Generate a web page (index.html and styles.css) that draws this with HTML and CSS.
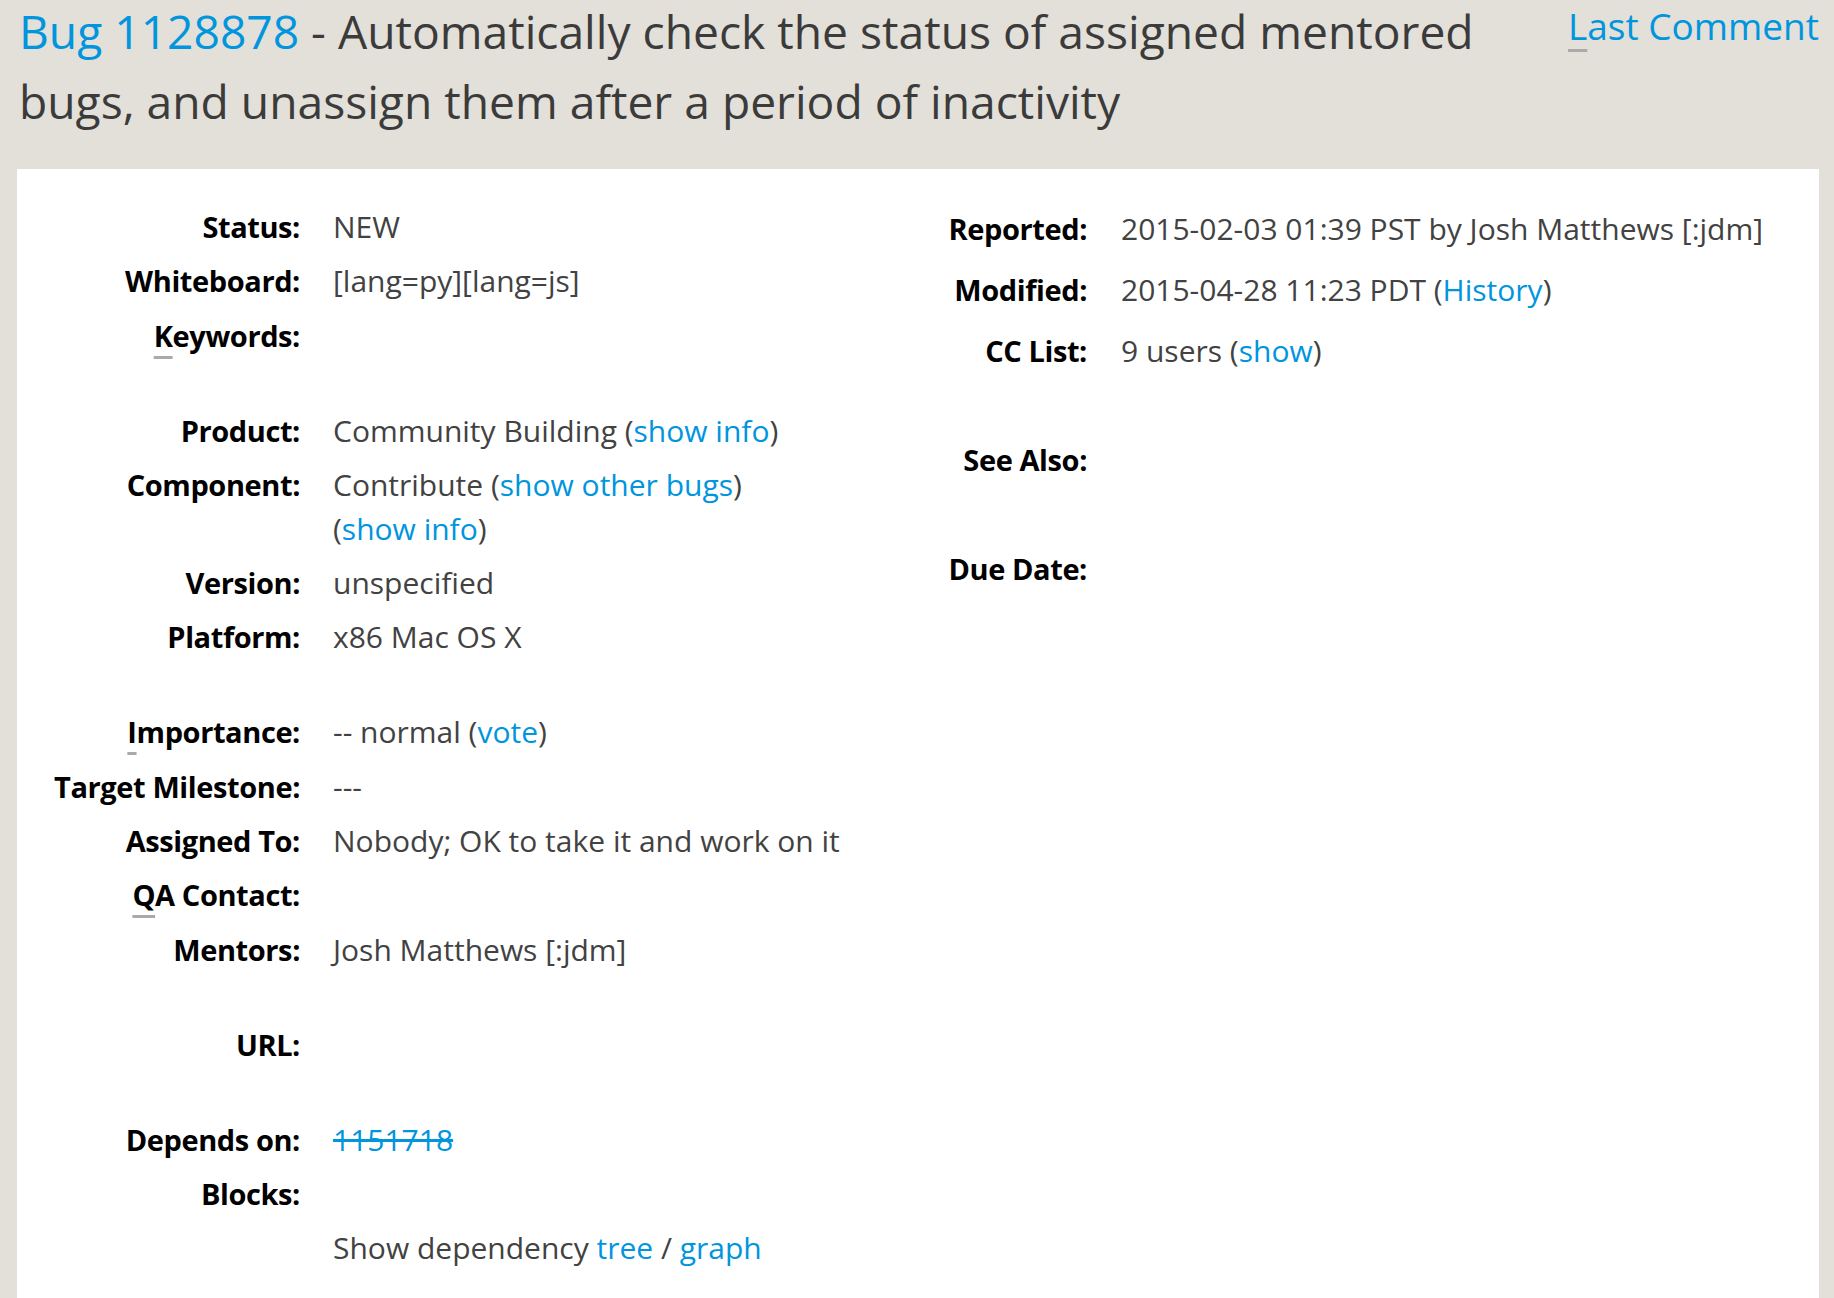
FILE: index.html
```html
<!DOCTYPE html>
<html lang="en">
<head>
<meta charset="utf-8">
<title>Bug 1128878 - Automatically check the status of assigned mentored bugs, and unassign them after a period of inactivity</title>
<link rel="stylesheet" href="styles.css">
</head>
<body>
<header class="page-head">
  <h1 class="bug-title"><a class="link" href="#">Bug 1128878</a> - Automatically check the status of assigned mentored bugs, and unassign them after a period of inactivity</h1>
  <a class="last-comment link" href="#"><span class="ak">L</span>ast Comment</a>
</header>
<main class="panel">
  <div class="cols">
    <div class="fields fields-left">
      <div class="group">
        <div class="label">Status:</div><div class="value">NEW</div>
        <div class="label">Whiteboard:</div><div class="value">[lang=py][lang=js]</div>
        <div class="label"><span class="ak">K</span>eywords:</div><div class="value"></div>
      </div>
      <div class="group">
        <div class="label">Product:</div><div class="value">Community Building (<a class="link" href="#">show info</a>)</div>
        <div class="label">Component:</div><div class="value">Contribute (<a class="link" href="#">show other bugs</a>)<br>(<a class="link" href="#">show info</a>)</div>
        <div class="label">Version:</div><div class="value">unspecified</div>
        <div class="label">Platform:</div><div class="value">x86 Mac OS X</div>
      </div>
      <div class="group">
        <div class="label"><span class="ak">I</span>mportance:</div><div class="value">-- normal (<a class="link" href="#">vote</a>)</div>
        <div class="label">Target Milestone:</div><div class="value">---</div>
        <div class="label">Assigned To:</div><div class="value">Nobody; OK to take it and work on it</div>
        <div class="label"><span class="ak">Q</span>A Contact:</div><div class="value"></div>
        <div class="label">Mentors:</div><div class="value">Josh Matthews [:jdm]</div>
      </div>
      <div class="group">
        <div class="label">URL:</div><div class="value"></div>
      </div>
      <div class="group">
        <div class="label">Depends on:</div><div class="value"><a class="link bz-closed" href="#">1151718</a></div>
        <div class="label">Blocks:</div><div class="value"></div>
        <div class="label"></div><div class="value">Show dependency <a class="link" href="#">tree</a> / <a class="link" href="#">graph</a></div>
      </div>
    </div>
    <div class="fields fields-right">
      <div class="group group-wide">
        <div class="label">Reported:</div><div class="value">2015-02-03 01:39 PST by Josh Matthews [:jdm]</div>
        <div class="label">Modified:</div><div class="value">2015-04-28 11:23 PDT (<a class="link" href="#">History</a>)</div>
        <div class="label">CC List:</div><div class="value">9 users (<a class="link" href="#">show</a>)</div>
      </div>
      <div class="group group-wide">
        <div class="label">See Also:</div><div class="value"></div>
      </div>
      <div class="group group-wide">
        <div class="label">Due Date:</div><div class="value"></div>
      </div>
    </div>
  </div>
</main>
</body>
</html>
```

FILE: styles.css
```css
html, body {
  margin: 0;
  padding: 0;
}

body {
  background-color: #e3e0d9;
  font-family: "Open Sans", "Noto Sans", sans-serif;
  color: #424242;
  padding: 0 15px 0 17px;
  overflow: hidden;
  height: 1298px;
}

.link {
  color: #0095dd;
  text-decoration: none;
}

.ak {
  text-decoration: underline;
  text-decoration-color: #aaaaaa;
  text-decoration-thickness: 3px;
  text-underline-offset: 9px;
}

.page-head {
  display: flex;
  align-items: flex-start;
  justify-content: space-between;
}

.bug-title {
  margin: -3px 0 0 2px;
  width: 1500px;
  font-size: 46.2px;
  line-height: 70px;
  font-weight: 400;
  color: #3b3b3b;
}

.last-comment {
  font-size: 37px;
  line-height: 52px;
  white-space: nowrap;
}

.panel {
  background: #ffffff;
  margin-top: 32px;
  padding-top: 36px;
  min-height: 1200px;
}

.cols {
  display: grid;
  grid-template-columns: 880px 1fr;
}

.fields {
  display: flex;
  flex-direction: column;
  gap: 51px;
  font-size: 30px;
  line-height: 44px;
}

.fields-right {
  margin-top: 2px;
  gap: 65px;
}

.group {
  display: grid;
  grid-template-columns: 283px 1fr;
  column-gap: 33px;
  row-gap: 10.3px;
}

.group-wide {
  grid-template-columns: 190px 1fr;
  column-gap: 34px;
  row-gap: 17px;
}

.label {
  text-align: right;
  font-weight: 700;
  font-size: 29px;
  letter-spacing: -0.4px;
  color: #000;
  white-space: nowrap;
}

.value {
  min-height: 44px;
  color: #424242;
}

.bz-closed {
  text-decoration: line-through;
}
```
